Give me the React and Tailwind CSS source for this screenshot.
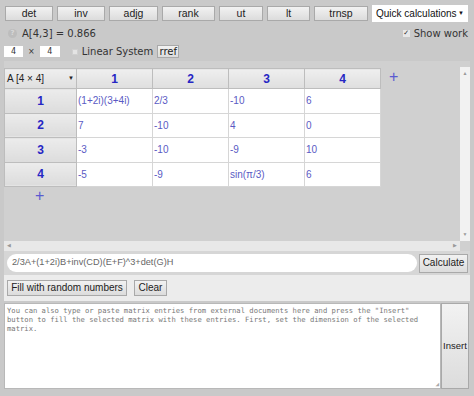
import React from "react";

const topButtons = [
  { label: "det", w: "w-[48px]" },
  { label: "inv", w: "w-[48px]" },
  { label: "adjg", w: "w-[49px]" },
  { label: "rank", w: "w-[53px]" },
  { label: "ut", w: "w-[44px]" },
  { label: "lt", w: "w-[43px]" },
  { label: "trnsp", w: "w-[54px]" },
];

const rows = [
  ["(1+2i)(3+4i)", "2/3", "-10", "6"],
  ["7", "-10", "4", "0"],
  ["-3", "-10", "-9", "10"],
  ["-5", "-9", "sin(π/3)", "6"],
];

function GrayButton({ children, className = "" }) {
  return (
    <button
      className={`border border-[#a9a9a9] bg-gradient-to-b from-[#f2f2f2] to-[#dcdcdc] text-[#222] leading-none whitespace-nowrap ${className}`}
    >
      {children}
    </button>
  );
}

export default function App() {
  return (
    <div
      className="w-[474px] h-[396px] overflow-hidden bg-[#c9c9c9] text-[#333]"
      style={{ fontFamily: '"Liberation Sans", Arial, sans-serif' }}
    >
      {/* top bar */}
      <div className="flex items-center gap-[4px] pl-[5px] pt-[5px] h-[22px]">
        {topButtons.map((b) => (
          <GrayButton key={b.label} className={`${b.w} h-[15px] text-[10.5px]`}>
            {b.label}
          </GrayButton>
        ))}
        <div className="w-[96px] h-[17px] bg-white flex items-center justify-between pl-[4px] pr-[4px] text-[10px] text-[#111] whitespace-nowrap">
          <span>Quick calculations</span>
          <span className="text-[6px]">▼</span>
        </div>
      </div>

      {/* result line */}
      <div
        className="flex items-center h-[22px] pl-[8px] pr-[6px] text-[#333]"
        style={{ fontFamily: '"DejaVu Sans", Verdana, sans-serif' }}
      >
        <span className="w-[9px] h-[9px] rounded-full bg-[#bdbdbd] text-[#d8d8d8] text-[7px] flex items-center justify-center font-bold">
          ?
        </span>
        <span className="ml-[5px] text-[10px]">A[4,3] = 0.866</span>
        <span className="ml-auto flex items-center gap-[4px]">
          <span className="w-[7px] h-[7px] bg-[#e8e8e8] flex items-center justify-center text-[7px] leading-none text-[#333]">
            ✓
          </span>
          <span className="text-[10px]">Show work</span>
        </span>
      </div>

      {/* dimension line */}
      <div
        className="flex items-center h-[15px] pl-[4px] text-[10px]"
        style={{ fontFamily: '"DejaVu Sans", Verdana, sans-serif' }}
      >
        <div className="w-[19px] h-[11px] bg-white text-[8px] flex items-center justify-center">4</div>
        <span className="mx-[5px] text-[8px]">×</span>
        <div className="w-[20px] h-[11px] bg-white text-[8px] flex items-center justify-center">4</div>
        <span className="ml-[12px] w-[6px] h-[6px] bg-[#e4e4e4] border border-[#d0d0d0]"></span>
        <span className="ml-[4px]">Linear System</span>
        <GrayButton className="ml-[4px] w-[22px] h-[13px] text-[10px]">rref</GrayButton>
      </div>

      {/* matrix panel */}
      <div className="mt-[2px] ml-[4px] w-[466px] bg-[#d0d0d0]">
        <div className="flex h-[180px]">
          <div className="flex-1 pt-[7px]">
            <div className="flex items-start">
              <table className="border-collapse">
                <thead>
                  <tr className="h-[20px]">
                    <th className="w-[72px] border border-[#bdbdbd] bg-gradient-to-b from-[#efefef] to-[#dedede] font-normal text-[#222] text-[10px]">
                      <div className="flex items-center justify-between px-[2px]">
                        <span>A [4 × 4]</span>
                        <span className="text-[6px]">▼</span>
                      </div>
                    </th>
                    {[1, 2, 3, 4].map((n) => (
                      <th
                        key={n}
                        className="w-[76px] border border-[#bdbdbd] bg-gradient-to-b from-[#efefef] to-[#dedede] text-[#2626c4] text-[12px] font-semibold"
                      >
                        {n}
                      </th>
                    ))}
                  </tr>
                </thead>
                <tbody>
                  {rows.map((r, i) => (
                    <tr key={i} className="h-[24.5px]">
                      <td className="border border-[#bdbdbd] bg-gradient-to-b from-[#ececec] to-[#dcdcdc] text-center text-[#2626c4] text-[12px] font-semibold">
                        {i + 1}
                      </td>
                      {r.map((c, j) => (
                        <td
                          key={j}
                          className="border border-[#d6d6d6] bg-white pl-[1px] text-[#5a5ac4] text-[10px]"
                        >
                          {c}
                        </td>
                      ))}
                    </tr>
                  ))}
                </tbody>
              </table>
              <span className="ml-[8px] mt-[1px] text-[#5a5ad0] text-[16px] leading-none">+</span>
            </div>
            <div className="pl-[31px] pt-[1px] text-[#5a5ad0] text-[16px] leading-none">+</div>
          </div>
          {/* vertical scrollbar */}
          <div className="w-[10px] mt-[6px] bg-[#f2f2f2] flex flex-col justify-between items-center text-[5px] text-[#999] py-[3px]">
            <span>▲</span>
            <span>▼</span>
          </div>
        </div>
        {/* horizontal scrollbar */}
        <div className="h-[10px] bg-[#e8e8e8] flex items-center justify-between px-[3px] mr-[10px] text-[5px] text-[#999]">
          <span>◀</span>
          <span>▶</span>
        </div>
        {/* formula */}
        <div className="flex items-center h-[24px] pl-[3px] pr-[2px] bg-[#d6d6d6]">
          <div className="w-[410px] h-[18px] bg-white rounded-full flex items-center pl-[5px] text-[9.2px] text-[#666]">
            2/3A+(1+2i)B+inv(CD)(E+F)^3+det(G)H
          </div>
          <GrayButton className="ml-auto w-[49px] h-[19px] text-[10px]">Calculate</GrayButton>
        </div>
      </div>

      {/* fill / clear band */}
      <div className="ml-[4px] w-[466px] h-[26px] bg-[#ececec] flex items-center gap-[7px] pl-[3px]">
        <GrayButton className="w-[120px] h-[16px] text-[10px]">Fill with random numbers</GrayButton>
        <GrayButton className="w-[33px] h-[16px] text-[10px]">Clear</GrayButton>
      </div>

      {/* paste area */}
      <div className="flex ml-[4px] mt-[2px] h-[86px]">
        <div
          className="w-[437px] h-full bg-white border border-[#b8b8b8] pl-[2px] pr-[4px] pt-[2px] text-[7.2px] leading-[9px] text-[#777] whitespace-pre-wrap relative"
          style={{ fontFamily: '"DejaVu Sans Mono", "Liberation Mono", monospace' }}
        >
          {'You can also type or paste matrix entries from external documents here and press the "Insert" button to fill the selected matrix with these entries. First, set the dimension of the selected matrix.'}
          <span className="absolute right-[1px] bottom-[1px] text-[6px] text-[#aaa] leading-none">◢</span>
        </div>
        <GrayButton className="w-[28px] h-full text-[9.5px]">Insert</GrayButton>
      </div>
    </div>
  );
}
